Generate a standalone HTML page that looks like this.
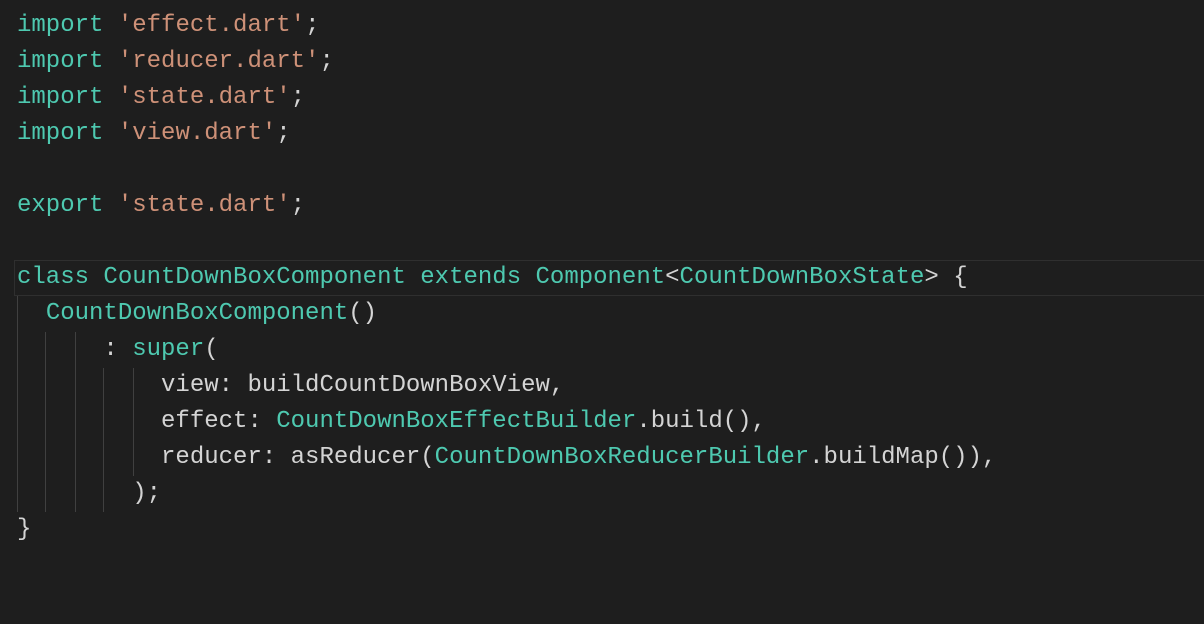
<!DOCTYPE html>
<html><head><style>
body{margin:0;width:1204px;height:624px;background:#1e1e1e;overflow:hidden;position:relative}
.code{position:absolute;left:17px;top:8px;font-family:"Liberation Mono",monospace;font-size:24px;line-height:36px;color:#d4d4d4;white-space:pre}
.k{color:#4ec9b0}.s{color:#ce9178}
.hl{position:absolute;left:14px;top:260px;width:1190px;height:34px;border:1px solid #2f2f2f}
.g{position:absolute;width:1px;background:#404040}
</style></head><body>
<div class="hl"></div>
<div class="g" style="left:17px;top:296px;height:216px"></div>
<div class="g" style="left:45px;top:332px;height:180px"></div>
<div class="g" style="left:75px;top:332px;height:180px"></div>
<div class="g" style="left:103px;top:368px;height:144px"></div>
<div class="g" style="left:133px;top:368px;height:108px"></div>
<div class="code"><span class="k">import</span> <span class="s">'effect.dart'</span>;
<span class="k">import</span> <span class="s">'reducer.dart'</span>;
<span class="k">import</span> <span class="s">'state.dart'</span>;
<span class="k">import</span> <span class="s">'view.dart'</span>;

<span class="k">export</span> <span class="s">'state.dart'</span>;

<span class="k">class</span> <span class="k">CountDownBoxComponent</span> <span class="k">extends</span> <span class="k">Component</span>&lt;<span class="k">CountDownBoxState</span>&gt; {
  <span class="k">CountDownBoxComponent</span>()
      : <span class="k">super</span>(
          view: buildCountDownBoxView,
          effect: <span class="k">CountDownBoxEffectBuilder</span>.build(),
          reducer: asReducer(<span class="k">CountDownBoxReducerBuilder</span>.buildMap()),
        );
}</div>
</body></html>
